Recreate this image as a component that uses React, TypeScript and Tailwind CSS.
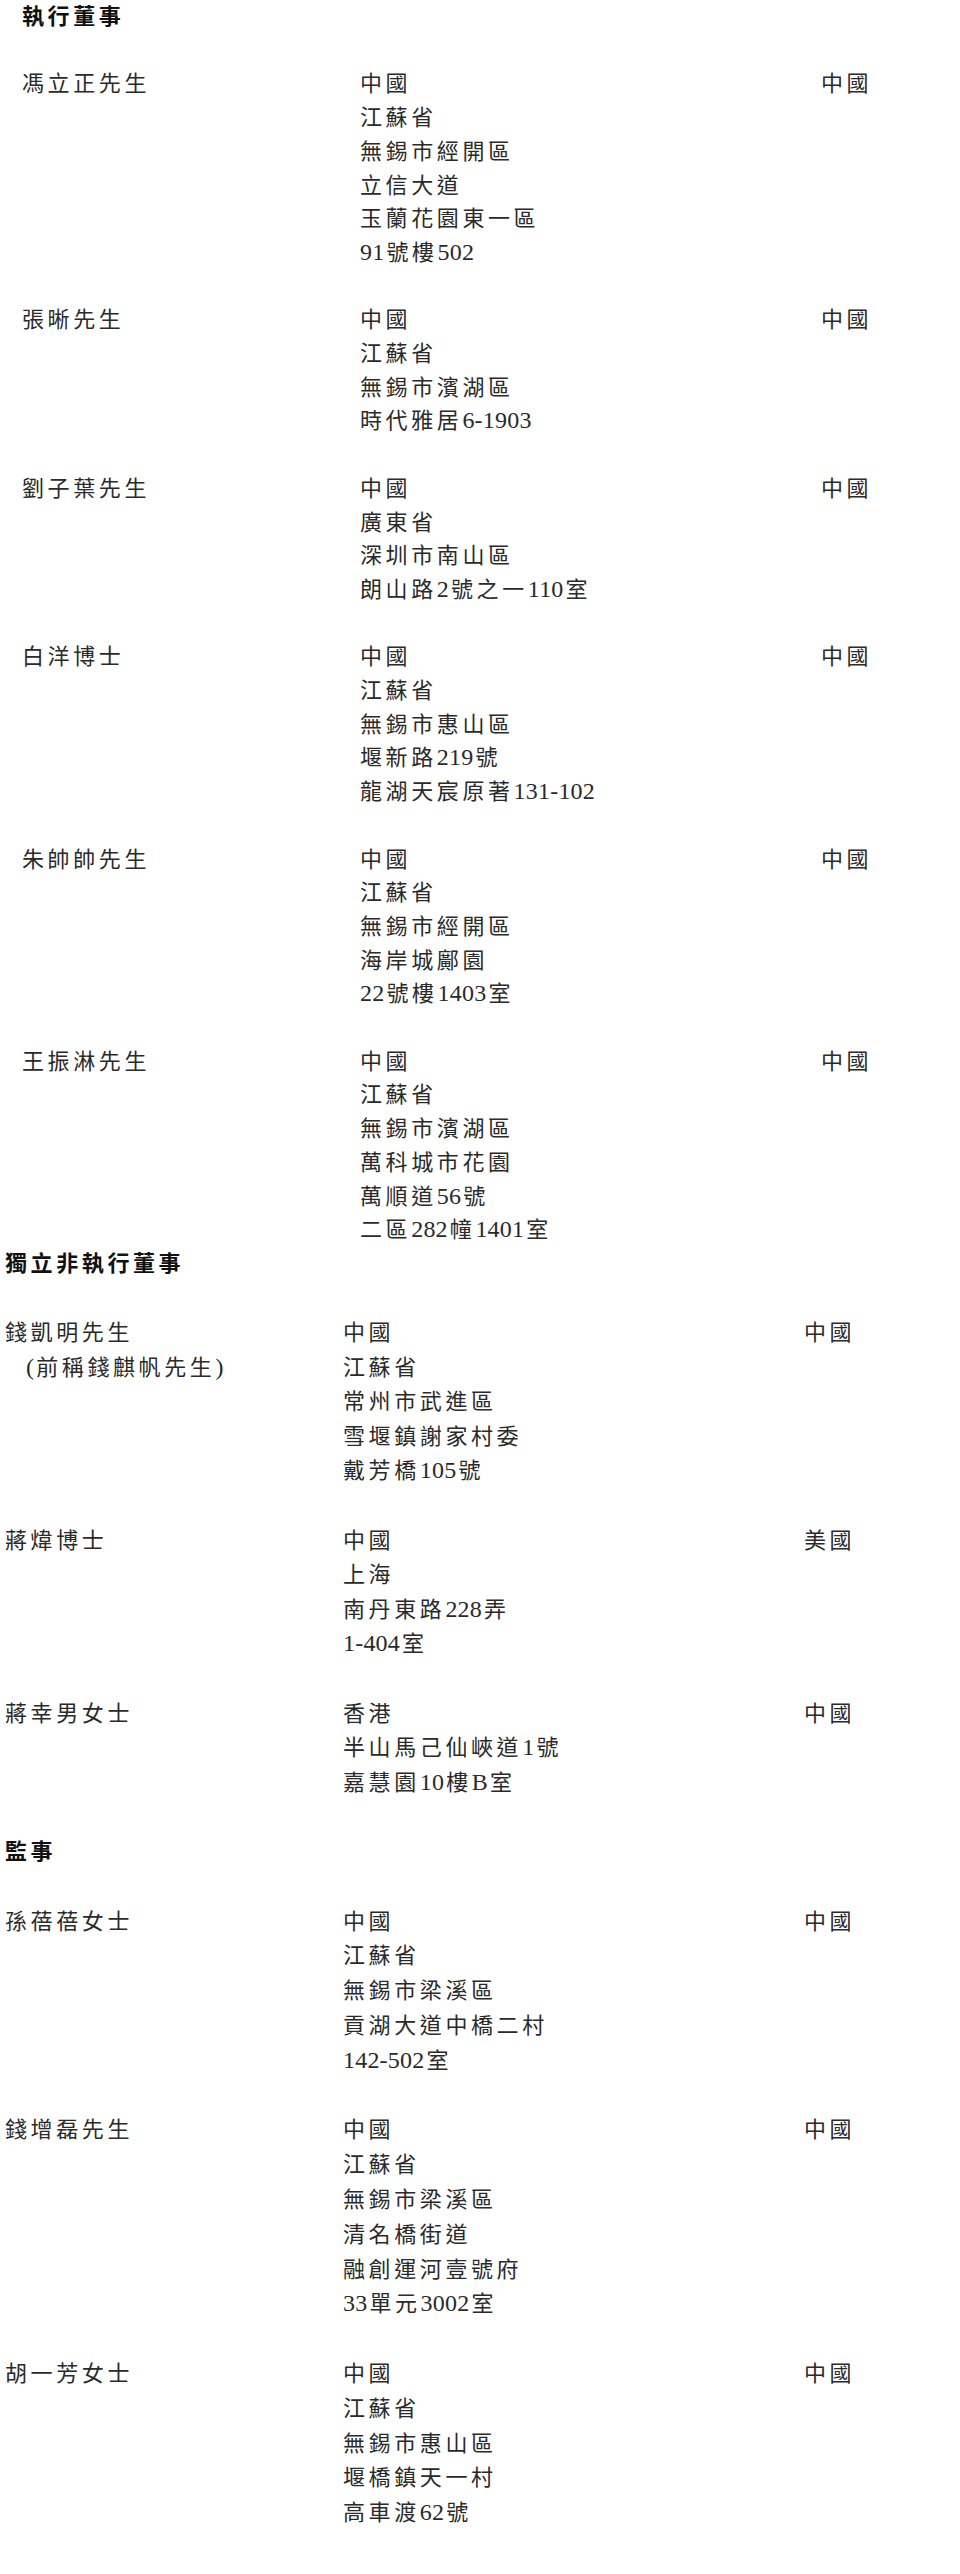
import React from "react";

type Row = { name: string[]; address: string[]; country: string };

const executive: Row[] = [
  {
    name: ["馮立正先生"],
    address: ["中國", "江蘇省", "無錫市經開區", "立信大道", "玉蘭花園東一區", "91號樓502"],
    country: "中國",
  },
  {
    name: ["張晰先生"],
    address: ["中國", "江蘇省", "無錫市濱湖區", "時代雅居6-1903"],
    country: "中國",
  },
  {
    name: ["劉子葉先生"],
    address: ["中國", "廣東省", "深圳市南山區", "朗山路2號之一110室"],
    country: "中國",
  },
  {
    name: ["白洋博士"],
    address: ["中國", "江蘇省", "無錫市惠山區", "堰新路219號", "龍湖天宸原著131-102"],
    country: "中國",
  },
  {
    name: ["朱帥帥先生"],
    address: ["中國", "江蘇省", "無錫市經開區", "海岸城鄺園", "22號樓1403室"],
    country: "中國",
  },
  {
    name: ["王振淋先生"],
    address: ["中國", "江蘇省", "無錫市濱湖區", "萬科城市花園", "萬順道56號", "二區282幢1401室"],
    country: "中國",
  },
];

const independent: Row[] = [
  {
    name: ["錢凱明先生", "(前稱錢麒帆先生)"],
    address: ["中國", "江蘇省", "常州市武進區", "雪堰鎮謝家村委", "戴芳橋105號"],
    country: "中國",
  },
  {
    name: ["蔣煒博士"],
    address: ["中國", "上海", "南丹東路228弄", "1-404室"],
    country: "美國",
  },
  {
    name: ["蔣幸男女士"],
    address: ["香港", "半山馬己仙峽道1號", "嘉慧園10樓B室"],
    country: "中國",
  },
];

const supervisors: Row[] = [
  {
    name: ["孫蓓蓓女士"],
    address: ["中國", "江蘇省", "無錫市梁溪區", "貢湖大道中橋二村", "142-502室"],
    country: "中國",
  },
  {
    name: ["錢增磊先生"],
    address: ["中國", "江蘇省", "無錫市梁溪區", "清名橋街道", "融創運河壹號府", "33單元3002室"],
    country: "中國",
  },
  {
    name: ["胡一芳女士"],
    address: ["中國", "江蘇省", "無錫市惠山區", "堰橋鎮天一村", "高車渡62號"],
    country: "中國",
  },
];

// CJK runs are spaced out like the printed page, latin/digit runs stay tight
const Txt: React.FC<{ s: string }> = ({ s }) => {
  const parts = s.match(/[\u3400-\u9fff]+|[^\u3400-\u9fff]+/g) ?? [];
  return (
    <>
      {parts.map((p, i) =>
        /[\u3400-\u9fff]/.test(p) ? (
          <span key={i} className="tracking-[3.6px]">
            {p}
          </span>
        ) : (
          <span key={i} className="text-[24px] leading-none tracking-[0.2px] mr-[2px]">
            {p}
          </span>
        )
      )}
    </>
  );
};

const PersonRow: React.FC<{ row: Row }> = ({ row }) => (
  <div className="grid grid-cols-[338px_461px_1fr]">
    <div className="flex flex-col">
      {row.name.map((n, i) => (
        <p key={i} className={i > 0 ? "pl-[21px]" : ""}>
          <Txt s={n} />
        </p>
      ))}
    </div>
    <div className="flex flex-col">
      {row.address.map((a, i) => (
        <p key={i}>
          <Txt s={a} />
        </p>
      ))}
    </div>
    <p>
      <Txt s={row.country} />
    </p>
  </div>
);

export default function App() {
  return (
    <div
      className="min-h-screen w-[960px] bg-white text-[22px] text-[#2a2a2a] font-normal"
      style={{ fontFamily: '"Liberation Serif", "Noto Sans CJK TC", serif' }}
    >
      <section className="pl-[22px] leading-[33.7px]">
        <h2 className="font-bold text-[#111] tracking-[3.6px]">執行董事</h2>
        <div className="mt-[33.7px] flex flex-col gap-[33.7px]">
          {executive.map((r) => (
            <PersonRow key={r.name[0]} row={r} />
          ))}
        </div>
      </section>

      <section className="pl-[5px] pb-[34.6px] leading-[34.6px]">
        <h2 className="font-bold text-[#111] tracking-[3.6px]">獨立非執行董事</h2>
        <div className="mt-[34.6px] flex flex-col gap-[34.6px]">
          {independent.map((r) => (
            <PersonRow key={r.name[0]} row={r} />
          ))}
        </div>
      </section>

      <section className="pl-[5px] leading-[34.8px]">
        <h2 className="font-bold text-[#111] tracking-[3.6px]">監事</h2>
        <div className="mt-[34.8px] flex flex-col gap-[34.8px]">
          {supervisors.map((r) => (
            <PersonRow key={r.name[0]} row={r} />
          ))}
        </div>
      </section>
    </div>
  );
}
